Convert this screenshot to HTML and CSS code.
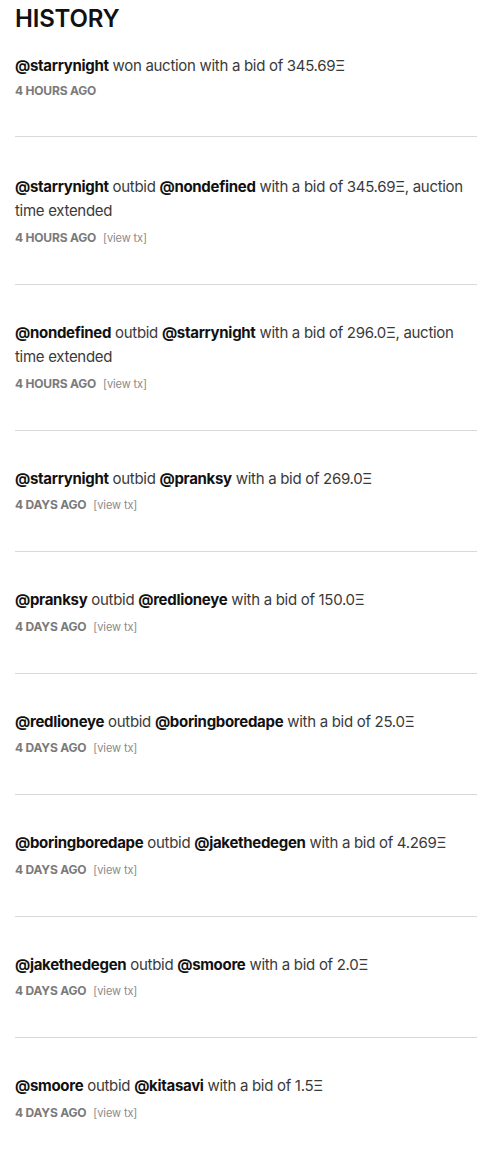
FILE: index.html
```html
<!DOCTYPE html>
<html>
<head>
<meta charset="utf-8">
<link rel="stylesheet" href="styles.css">
</head>
<body>
<section class="history">
  <h2 class="title">HISTORY</h2>
  <ul class="list">
    <li class="item">
      <p class="text"><b>@starrynight</b> won auction with a bid of 345.69Ξ</p>
      <p class="meta"><span class="when">4 HOURS AGO</span></p>
    </li>
    <li class="item">
      <p class="text"><b>@starrynight</b> outbid <b>@nondefined</b> with a bid of 345.69Ξ, auction<br>time extended</p>
      <p class="meta"><span class="when">4 HOURS AGO</span><a class="tx">[view tx]</a></p>
    </li>
    <li class="item">
      <p class="text"><b>@nondefined</b> outbid <b>@starrynight</b> with a bid of 296.0Ξ, auction<br>time extended</p>
      <p class="meta"><span class="when">4 HOURS AGO</span><a class="tx">[view tx]</a></p>
    </li>
    <li class="item">
      <p class="text"><b>@starrynight</b> outbid <b>@pranksy</b> with a bid of 269.0Ξ</p>
      <p class="meta"><span class="when">4 DAYS AGO</span><a class="tx">[view tx]</a></p>
    </li>
    <li class="item">
      <p class="text"><b>@pranksy</b> outbid <b>@redlioneye</b> with a bid of 150.0Ξ</p>
      <p class="meta"><span class="when">4 DAYS AGO</span><a class="tx">[view tx]</a></p>
    </li>
    <li class="item">
      <p class="text"><b>@redlioneye</b> outbid <b>@boringboredape</b> with a bid of 25.0Ξ</p>
      <p class="meta"><span class="when">4 DAYS AGO</span><a class="tx">[view tx]</a></p>
    </li>
    <li class="item">
      <p class="text"><b>@boringboredape</b> outbid <b>@jakethedegen</b> with a bid of 4.269Ξ</p>
      <p class="meta"><span class="when">4 DAYS AGO</span><a class="tx">[view tx]</a></p>
    </li>
    <li class="item">
      <p class="text"><b>@jakethedegen</b> outbid <b>@smoore</b> with a bid of 2.0Ξ</p>
      <p class="meta"><span class="when">4 DAYS AGO</span><a class="tx">[view tx]</a></p>
    </li>
    <li class="item">
      <p class="text"><b>@smoore</b> outbid <b>@kitasavi</b> with a bid of 1.5Ξ</p>
      <p class="meta"><span class="when">4 DAYS AGO</span><a class="tx">[view tx]</a></p>
    </li>
  </ul>
</section>
</body>
</html>
```
FILE: styles.css
```css
html, body {
  margin: 0;
  padding: 0;
  background: #fff;
}
body {
  font-family: Inter, "Liberation Sans", sans-serif;
  color: #333;
}
.history {
  padding: 0 14px 0 15px;
}
.title {
  margin: 0;
  padding-top: 6px;
  font-size: 24px;
  line-height: 26px;
  font-weight: 600;
  color: #111;
  letter-spacing: -0.2px;
}
.list {
  list-style: none;
  margin: 0;
  padding: 0;
}
.item {
  padding: 36px 0 39px;
  border-bottom: 1px solid #d9d9d9;
}
.item:first-child {
  padding-top: 22px;
  padding-bottom: 38px;
}
.item:first-child .meta {
  margin-top: 5px;
}
.item:nth-child(2) {
  padding-top: 38px;
}
.item:last-child {
  border-bottom: none;
}
.text {
  margin: 0;
  font-size: 15px;
  line-height: 24.5px;
  color: #3a3a3a;
  letter-spacing: -0.3px;
}
.text b {
  font-weight: 700;
  color: #111;
}
.meta {
  margin: 7px 0 0;
  font-size: 12px;
  line-height: 14px;
  display: flex;
  align-items: baseline;
  gap: 7px;
}
.when {
  font-weight: 700;
  color: #7a7a7a;
  letter-spacing: -0.2px;
}
.tx {
  color: #8a8a8a;
  font-weight: 400;
  font-size: 11px;
  letter-spacing: -0.1px;
}
```
